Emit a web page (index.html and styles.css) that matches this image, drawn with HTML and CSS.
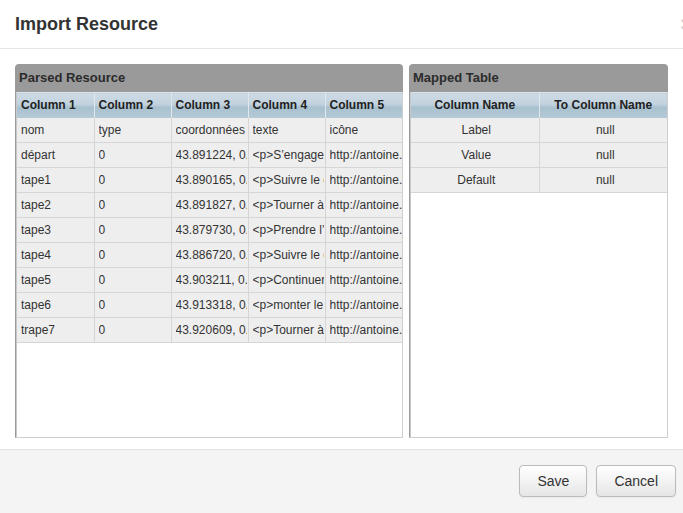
FILE: index.html
```html
<!DOCTYPE html>
<html>
<head>
<meta charset="utf-8">
<title>Import Resource</title>
<link rel="stylesheet" href="styles.css">
</head>
<body>
<div class="dialog">
  <div class="dialog-header">
    <h1 class="dialog-title">Import Resource</h1>
    <span class="close">×</span>
  </div>
  <div class="dialog-body">
    <div class="panel panel-parsed">
      <div class="panel-title">Parsed Resource</div>
      <div class="panel-body">
        <table class="grid">
          <thead>
            <tr><th>Column 1</th><th>Column 2</th><th>Column 3</th><th>Column 4</th><th>Column 5</th></tr>
          </thead>
          <tbody>
            <tr><td><span class="cell">nom</span></td><td><span class="cell">type</span></td><td><span class="cell">coordonnées</span></td><td><span class="cell">texte</span></td><td><span class="cell">icône</span></td></tr>
            <tr><td><span class="cell">départ</span></td><td><span class="cell">0</span></td><td><span class="cell">43.891224, 0.49</span></td><td><span class="cell">&lt;p&gt;S’engager sur</span></td><td><span class="cell">http://antoine.fr/</span></td></tr>
            <tr><td><span class="cell">tape1</span></td><td><span class="cell">0</span></td><td><span class="cell">43.890165, 0.49</span></td><td><span class="cell">&lt;p&gt;Suivre le chemin</span></td><td><span class="cell">http://antoine.fr/</span></td></tr>
            <tr><td><span class="cell">tape2</span></td><td><span class="cell">0</span></td><td><span class="cell">43.891827, 0.49</span></td><td><span class="cell">&lt;p&gt;Tourner à droite</span></td><td><span class="cell">http://antoine.fr/</span></td></tr>
            <tr><td><span class="cell">tape3</span></td><td><span class="cell">0</span></td><td><span class="cell">43.879730, 0.49</span></td><td><span class="cell">&lt;p&gt;Prendre l’allée</span></td><td><span class="cell">http://antoine.fr/</span></td></tr>
            <tr><td><span class="cell">tape4</span></td><td><span class="cell">0</span></td><td><span class="cell">43.886720, 0.49</span></td><td><span class="cell">&lt;p&gt;Suivre le chemin</span></td><td><span class="cell">http://antoine.fr/</span></td></tr>
            <tr><td><span class="cell">tape5</span></td><td><span class="cell">0</span></td><td><span class="cell">43.903211, 0.49</span></td><td><span class="cell">&lt;p&gt;Continuer tout</span></td><td><span class="cell">http://antoine.fr/</span></td></tr>
            <tr><td><span class="cell">tape6</span></td><td><span class="cell">0</span></td><td><span class="cell">43.913318, 0.49</span></td><td><span class="cell">&lt;p&gt;monter le long</span></td><td><span class="cell">http://antoine.fr/</span></td></tr>
            <tr><td><span class="cell">trape7</span></td><td><span class="cell">0</span></td><td><span class="cell">43.920609, 0.49</span></td><td><span class="cell">&lt;p&gt;Tourner à gauche</span></td><td><span class="cell">http://antoine.fr/</span></td></tr>
          </tbody>
        </table>
      </div>
    </div>
    <div class="panel panel-mapped">
      <div class="panel-title">Mapped Table</div>
      <div class="panel-body">
        <table class="grid grid-centered">
          <thead>
            <tr><th>Column Name</th><th>To Column Name</th></tr>
          </thead>
          <tbody>
            <tr><td><span class="cell">Label</span></td><td><span class="cell">null</span></td></tr>
            <tr><td><span class="cell">Value</span></td><td><span class="cell">null</span></td></tr>
            <tr><td><span class="cell">Default</span></td><td><span class="cell">null</span></td></tr>
          </tbody>
        </table>
      </div>
    </div>
  </div>
  <div class="dialog-footer">
    <button class="btn">Save</button>
    <button class="btn">Cancel</button>
  </div>
</div>
</body>
</html>
```

FILE: styles.css
```css
html, body {
  margin: 0;
  padding: 0;
  background: #ffffff;
  overflow: hidden;
}

body {
  font-family: "Liberation Sans", Arial, sans-serif;
  color: #333333;
}

.dialog {
  width: 683px;
  height: 513px;
  display: flex;
  flex-direction: column;
  background: #ffffff;
  overflow: hidden;
}

.dialog-header {
  height: 48px;
  display: flex;
  align-items: center;
  justify-content: space-between;
  padding-left: 15px;
  border-bottom: 1px solid #e5e5e5;
  flex-shrink: 0;
}

.dialog-title {
  margin: 0;
  font-size: 18px;
  font-weight: bold;
  color: #333333;
  line-height: 20px;
  padding-bottom: 1px;
}

.close {
  font-size: 20px;
  font-weight: bold;
  color: #cccccc;
  margin-right: -9px;
  line-height: 20px;
}

.dialog-body {
  display: flex;
  gap: 6px;
  padding: 15px 15px 0 15px;
  height: 374px;
  flex-shrink: 0;
}

.panel {
  display: flex;
  flex-direction: column;
  height: 374px;
}

.panel-parsed {
  width: 388px;
}

.panel-mapped {
  width: 259px;
}

.panel-title {
  height: 28px;
  line-height: 27px;
  background: #9a9a9a;
  border-radius: 4px 4px 0 0;
  font-size: 13px;
  font-weight: bold;
  color: #2b2b2b;
  padding-left: 4px;
  flex-shrink: 0;
}

.panel-body {
  flex: 1;
  background: #ffffff;
  border-left: 1px solid #9a9a9a;
  border-right: 1px solid #cfcfcf;
  border-bottom: 1px solid #cfcfcf;
  box-shadow: inset 1px 0 0 #c8c8c8;
  padding-left: 1px;
  overflow: hidden;
}

.grid {
  width: 100%;
  table-layout: fixed;
  border-collapse: collapse;
  font-size: 12px;
}

.grid th {
  height: 25px;
  padding: 0 4px;
  text-align: left;
  font-weight: bold;
  color: #222222;
  background: linear-gradient(#cedbe5 0%, #c0d1dd 45%, #a8c0cf 55%, #b6cad7 100%);
  border-right: 1px solid #dfe7ed;
  border-top: 1px solid #dde5ea;
  white-space: nowrap;
  overflow: hidden;
  box-sizing: border-box;
}

.grid td {
  height: 25px;
  padding: 0 1px 0 4px;
  background: #eeeeee;
  border-right: 1px solid #d6d6d6;
  border-bottom: 1px solid #d6d6d6;
  color: #333333;
  white-space: nowrap;
  box-sizing: border-box;
}

.cell {
  display: block;
  overflow: hidden;
  white-space: nowrap;
  text-overflow: clip;
}

.grid th:last-child,
.grid td:last-child {
  border-right: none;
}

.grid td:last-child {
  padding-right: 0;
}

.grid-centered th,
.grid-centered td {
  text-align: center;
}

.dialog-footer {
  margin-top: 11px;
  flex: 1;
  background: #f4f4f4;
  border-top: 1px solid #e2e2e2;
  display: flex;
  justify-content: flex-end;
  align-items: flex-start;
  gap: 9px;
  padding: 15px 7px 0 0;
}

.btn {
  height: 32px;
  padding: 0 17px;
  font-family: "Liberation Sans", Arial, sans-serif;
  font-size: 14px;
  color: #333333;
  background: linear-gradient(#ffffff, #e6e6e6);
  border: 1px solid #bbbbbb;
  border-radius: 4px;
  box-shadow: inset 0 1px 0 rgba(255,255,255,0.6), 0 1px 2px rgba(0,0,0,0.05);
  cursor: pointer;
}
```
